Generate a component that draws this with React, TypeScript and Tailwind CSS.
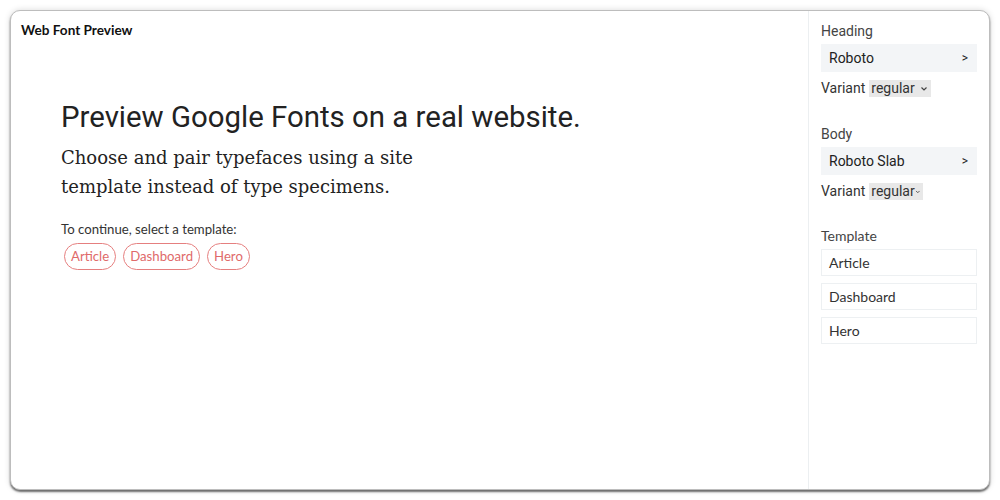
const ui = { fontFamily: 'Lato, "Open Sans", "Liberation Sans", sans-serif' };
const roboto = { fontFamily: 'Roboto, "Liberation Sans", sans-serif' };
const slab = { fontFamily: '"DejaVu Serif", "Liberation Serif", serif' };

function FontPicker({ label, font, selectWidth }: { label: string; font: string; selectWidth: string }) {
  return (
    <div>
      <div className="text-[14px] leading-5 text-[#444]" style={roboto}>{label}</div>
      <div className="mt-[3px] flex h-[28px] items-center justify-between bg-[#f3f5f7] pl-2 pr-[9px] text-[14px] text-[#222]" style={roboto}>
        <span>{font}</span>
        <span className="text-[12px]">&gt;</span>
      </div>
      <div className="mt-[6px] flex items-center gap-[4px] text-[14px] text-[#333]" style={roboto}>
        <span>Variant</span>
        <span className={`flex h-[17px] items-center justify-between bg-[#e8e8e8] px-[2px] ${selectWidth}`}>
          <span>regular</span>
          <svg width="8" height="6" viewBox="0 0 8 6" className="mr-[1px]">
            <path d="M1.5 1.5 L4 4 L6.5 1.5" fill="none" stroke="#444" strokeWidth="1.2" />
          </svg>
        </span>
      </div>
    </div>
  );
}

export default function App() {
  return (
    <div className="h-[500px] w-[1000px] bg-white pl-[10px] pt-[10px]">
      <div className="flex h-[480px] w-[980px] overflow-hidden rounded-[10px] border border-[#bdbdbd] bg-white shadow-[0_2px_2px_rgba(0,0,0,0.55),0_0_6px_rgba(0,0,0,0.15)]">
        <main className="flex-1 pl-[10px] pt-[9px]" style={ui}>
          <div className="text-[13.6px] font-bold text-[#111]">Web Font Preview</div>
          <div className="pl-[40px] pt-[57px]">
            <h1 className="text-[29.4px] leading-[40px] text-[#222]" style={roboto}>
              Preview Google Fonts on a real website.
            </h1>
            <p className="mt-[6px] w-[360px] text-[18px] leading-[29px] text-[#222]" style={slab}>
              Choose and pair typefaces using a site template instead of type specimens.
            </p>
            <div className="mt-[19px] text-[13.2px] text-[#333]">To continue, select a template:</div>
            <div className="mt-[3px] flex gap-[7px] pl-[3px]">
              {['Article', 'Dashboard', 'Hero'].map((t) => (
                <span
                  key={t}
                  className="rounded-full border border-[#e57f7f] px-[6px] py-[2px] text-[13.2px] leading-[21px] text-[#e06a6a]"
                >
                  {t}
                </span>
              ))}
            </div>
          </div>
        </main>
        <aside className="w-[181px] border-l border-[#eceff1] px-[12px] pt-[10px]">
          <FontPicker label="Heading" font="Roboto" selectWidth="w-[62px]" />
          <div className="h-[25px]" />
          <FontPicker label="Body" font="Roboto Slab" selectWidth="w-[54px]" />
          <div className="mt-[24px] text-[14px] leading-5 text-[#444]" style={ui}>Template</div>
          <div className="mt-[3px] flex flex-col gap-[7px]" style={ui}>
            {['Article', 'Dashboard', 'Hero'].map((t) => (
              <div key={t} className="flex h-[27px] items-center border border-[#edf0f2] pl-[7px] text-[14px] text-[#333]">
                {t}
              </div>
            ))}
          </div>
        </aside>
      </div>
    </div>
  );
}
